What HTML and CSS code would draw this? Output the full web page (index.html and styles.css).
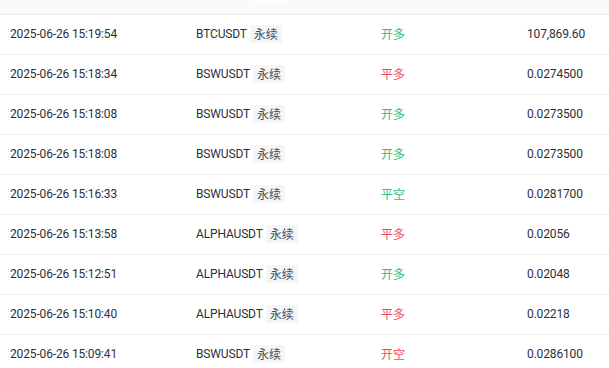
FILE: index.html
```html
<!DOCTYPE html>
<html>
<head>
<meta charset="utf-8">
<link rel="stylesheet" href="styles.css">
</head>
<body>
<div class="table">
  <div class="row prev">
    <span class="c-time"></span>
    <span class="c-sym"><span class="ghost-box"></span></span>
  </div>
  <div class="row"><span class="c-time">2025-06-26 15:19:54</span><span class="c-sym">BTCUSDT<span class="tag">永续</span></span><span class="c-dir buy">开多</span><span class="c-price">107,869.60</span></div>
  <div class="row"><span class="c-time">2025-06-26 15:18:34</span><span class="c-sym">BSWUSDT<span class="tag">永续</span></span><span class="c-dir sell">平多</span><span class="c-price">0.0274500</span></div>
  <div class="row"><span class="c-time">2025-06-26 15:18:08</span><span class="c-sym">BSWUSDT<span class="tag">永续</span></span><span class="c-dir buy">开多</span><span class="c-price">0.0273500</span></div>
  <div class="row"><span class="c-time">2025-06-26 15:18:08</span><span class="c-sym">BSWUSDT<span class="tag">永续</span></span><span class="c-dir buy">开多</span><span class="c-price">0.0273500</span></div>
  <div class="row"><span class="c-time">2025-06-26 15:16:33</span><span class="c-sym">BSWUSDT<span class="tag">永续</span></span><span class="c-dir buy">平空</span><span class="c-price">0.0281700</span></div>
  <div class="row"><span class="c-time">2025-06-26 15:13:58</span><span class="c-sym">ALPHAUSDT<span class="tag">永续</span></span><span class="c-dir sell">平多</span><span class="c-price">0.02056</span></div>
  <div class="row"><span class="c-time">2025-06-26 15:12:51</span><span class="c-sym">ALPHAUSDT<span class="tag">永续</span></span><span class="c-dir buy">开多</span><span class="c-price">0.02048</span></div>
  <div class="row"><span class="c-time">2025-06-26 15:10:40</span><span class="c-sym">ALPHAUSDT<span class="tag">永续</span></span><span class="c-dir sell">平多</span><span class="c-price">0.02218</span></div>
  <div class="row"><span class="c-time">2025-06-26 15:09:41</span><span class="c-sym">BSWUSDT<span class="tag">永续</span></span><span class="c-dir sell">开空</span><span class="c-price">0.0286100</span></div>
</div>
</body>
</html>
```
FILE: styles.css
```css
html, body {
  margin: 0;
  padding: 0;
  background: #ffffff;
  overflow: hidden;
}
body {
  font-family: Roboto, "Noto Sans CJK SC", sans-serif;
  font-size: 12px;
  color: #2b3139;
}
.table {
  display: flex;
  flex-direction: column;
  margin-top: -25px;
}
.row {
  display: grid;
  grid-template-columns: 186px 185px 146px 1fr;
  align-items: center;
  height: 40px;
  box-sizing: border-box;
  border-bottom: 1px solid #eaecef;
  padding-left: 10px;
  padding-bottom: 2px;
  letter-spacing: -0.15px;
}
.row.prev {
  background: #fafafa;
}
.c-sym {
  display: flex;
  align-items: center;
}
.tag {
  display: inline-block;
  margin-left: 3px;
  padding: 0 4px;
  height: 18px;
  line-height: 18px;
  background: #f5f5f5;
  color: #474d57;
  font-family: "Noto Sans CJK SC", sans-serif;
  font-size: 12px;
  letter-spacing: 0;
  border-radius: 2px;
}
.ghost-box {
  display: block;
  margin-left: 57px;
  width: 33px;
  height: 18px;
  background: #ffffff;
  border-radius: 2px;
}
.c-dir {
  font-family: "Noto Sans CJK SC", sans-serif;
  letter-spacing: 0;
}
.buy { color: #2ebd85; }
.sell { color: #f6465d; }
```
